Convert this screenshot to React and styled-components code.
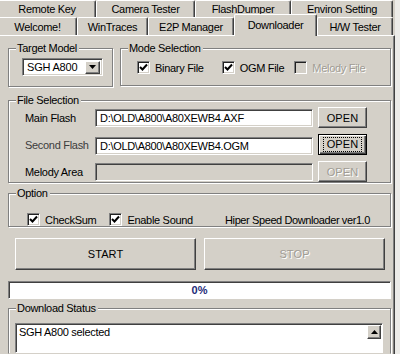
import React from "react";
import styled, { createGlobalStyle } from "styled-components";

const GlobalStyle = createGlobalStyle`
  html, body {
    margin: 0;
    padding: 0;
    background: #ecebe8;
  }
  body {
    font-family: "Liberation Sans", Arial, sans-serif;
    font-size: 11px;
    color: #000000;
  }
`;

const FACE = "#d4d0c8";

const Window = styled.div`
  width: 395px;
  height: 354px;
  overflow: hidden;
  background: ${FACE};
  display: flex;
  flex-direction: column;
`;

const TabRow = styled.div`
  display: flex;
  height: ${(p) => p.$h}px;
  margin-left: -2px;
`;

const Tab = styled.div`
  box-sizing: border-box;
  width: ${(p) => p.$w}px;
  height: ${(p) => (p.$active ? 22 : p.$h)}px;
  margin-top: ${(p) => (p.$active ? -3 : 0)}px;
  position: relative;
  z-index: ${(p) => (p.$active ? 2 : 1)};
  background: ${FACE};
  border-top: 1px solid #ffffff;
  border-left: 1px solid #ffffff;
  border-right: 1px solid #404040;
  box-shadow: inset -1px 0 0 #808080;
  border-radius: 2px 2px 0 0;
  display: flex;
  align-items: ${(p) => (p.$active ? "flex-start" : "center")};
  padding-top: ${(p) => (p.$active ? 4 : 0)}px;
  justify-content: center;
  white-space: nowrap;
  letter-spacing: -0.3px;
`;

const Page = styled.div`
  flex: 1;
  box-sizing: border-box;
  border-top: 1px solid #ffffff;
  border-right: 1px solid #404040;
  box-shadow: inset -1px 0 0 #808080;
  padding: 12px 3px 0 8px;
  display: flex;
  flex-direction: column;
`;

const Row = styled.div`
  display: flex;
  gap: ${(p) => p.$gap || 0}px;
`;

const Group = styled.div`
  box-sizing: border-box;
  width: ${(p) => (p.$w ? `${p.$w}px` : "auto")};
  flex: ${(p) => (p.$w ? "none" : 1)};
  height: ${(p) => (p.$h ? `${p.$h}px` : "auto")};
  margin-top: ${(p) => p.$mt || 0}px;
  border: 1px solid #808080;
  border-bottom-color: ${(p) => (p.$open ? "transparent" : "#808080")};
  box-shadow: inset 1px 1px 0 #ffffff, 1px 1px 0 #ffffff;
  display: flex;
  flex-direction: column;
`;

const Legend = styled.div`
  align-self: flex-start;
  margin: -7px 0 0 7px;
  padding: 0 2px 0 1px;
  line-height: 12px;
  background: ${FACE};
  letter-spacing: -0.3px;
  white-space: nowrap;
`;

const Select = styled.div`
  box-sizing: border-box;
  width: 81px;
  height: 18px;
  margin: 4px 0 0 13px;
  background: #ffffff;
  border: 1px solid;
  border-color: #808080 #ffffff #ffffff #808080;
  box-shadow: inset 1px 1px 0 #404040, inset -1px -1px 0 ${FACE};
  display: flex;
  align-items: center;
  padding: 0 2px 0 4px;
  letter-spacing: -0.2px;
`;

const SelectText = styled.span`
  flex: 1;
`;

const DropButton = styled.div`
  box-sizing: border-box;
  width: 15px;
  height: 13px;
  background: ${FACE};
  border: 1px solid;
  border-color: #ffffff #404040 #404040 #ffffff;
  box-shadow: inset -1px -1px 0 #808080;
  display: flex;
  align-items: center;
  justify-content: center;
`;

const CheckRow = styled.div`
  display: flex;
  align-items: center;
  margin: ${(p) => p.$m};
`;

const CheckItem = styled.label`
  display: flex;
  align-items: center;
  gap: 5px;
  margin-right: ${(p) => p.$mr || 0}px;
  color: ${(p) => (p.$disabled ? "#a09c94" : "#000000")};
  text-shadow: ${(p) => (p.$disabled ? "1px 1px 0 #ffffff" : "none")};
  letter-spacing: -0.3px;
  white-space: nowrap;
`;

const Box = styled.span`
  box-sizing: border-box;
  width: 13px;
  height: 13px;
  flex: none;
  background: ${(p) => (p.$disabled ? FACE : "#ffffff")};
  border: 1px solid;
  border-color: #808080 #ffffff #ffffff #808080;
  box-shadow: inset 1px 1px 0 #202020, inset -1px -1px 0 ${FACE};
  display: flex;
  align-items: center;
  justify-content: center;
`;

const FileRows = styled.div`
  display: flex;
  flex-direction: column;
  gap: 6px;
  margin: 1px 0 0 16px;
`;

const FileRow = styled.div`
  display: flex;
  align-items: center;
  height: 21px;
`;

const FieldLabel = styled.span`
  width: 70px;
  color: ${(p) => (p.$dim ? "#3c3c3c" : "#000000")};
  letter-spacing: -0.3px;
  white-space: nowrap;
`;

const Field = styled.div`
  box-sizing: border-box;
  width: 218px;
  height: 18px;
  margin-top: ${(p) => p.$mt || 0}px;
  background: ${(p) => (p.$disabled ? FACE : "#ffffff")};
  border: 1px solid;
  border-color: #808080 #ffffff #ffffff #808080;
  box-shadow: inset 1px 1px 0 #404040, inset -1px -1px 0 ${FACE};
  display: flex;
  align-items: center;
  padding-left: 4px;
  letter-spacing: -0.3px;
  white-space: nowrap;
  overflow: hidden;
`;

const Button = styled.div`
  box-sizing: border-box;
  width: ${(p) => (p.$w ? `${p.$w}px` : "auto")};
  flex: ${(p) => (p.$w ? "none" : 1)};
  height: ${(p) => p.$h}px;
  margin-left: ${(p) => p.$ml || 0}px;
  background: ${FACE};
  border: 1px solid;
  border-color: ${(p) =>
    p.$focus ? "#000000" : "#ffffff #404040 #404040 #ffffff"};
  box-shadow: ${(p) =>
    p.$focus
      ? "inset 1px 1px 0 #ffffff, inset -1px -1px 0 #404040, inset -2px -2px 0 #808080"
      : "inset -1px -1px 0 #808080"};
  display: flex;
  align-items: center;
  justify-content: center;
  color: ${(p) => (p.$disabled ? "#a09c94" : "#000000")};
  text-shadow: ${(p) => (p.$disabled ? "1px 1px 0 #ffffff" : "none")};
  letter-spacing: 0.1px;
`;

const FocusRing = styled.span`
  border: 1px dotted #000000;
  padding: 1px 3px;
  line-height: 11px;
`;

const InfoText = styled.span`
  margin-left: auto;
  margin-right: 20px;
  letter-spacing: -0.4px;
  white-space: nowrap;
`;

const ButtonRow = styled.div`
  display: flex;
  gap: 8px;
  margin: 11px 6px 0 7px;
`;

const Progress = styled.div`
  box-sizing: border-box;
  height: 18px;
  margin-top: 11px;
  background: #ffffff;
  border: 1px solid;
  border-color: #808080 #ffffff #ffffff #808080;
  box-shadow: inset 1px 1px 0 #404040;
  display: flex;
  align-items: center;
  justify-content: center;
  color: #1c2a78;
  font-weight: bold;
`;

const ListBox = styled.div`
  box-sizing: border-box;
  height: 30px;
  margin: 9px 7px 0 6px;
  background: #ffffff;
  border: 1px solid;
  border-color: #808080 #ffffff #ffffff #808080;
  box-shadow: inset 1px 1px 0 #404040;
  display: flex;
  align-items: flex-start;
`;

const ListText = styled.span`
  flex: 1;
  padding: 2px 0 0 3px;
  letter-spacing: -0.3px;
`;

const ScrollButton = styled.div`
  box-sizing: border-box;
  width: 14px;
  height: 14px;
  margin: 1px 1px 0 0;
  background: ${FACE};
  border: 1px solid;
  border-color: #ffffff #404040 #404040 #ffffff;
  box-shadow: inset -1px -1px 0 #808080;
  display: flex;
  align-items: center;
  justify-content: center;
`;

const Check = () => (
  <svg width="9" height="9" viewBox="0 0 9 9">
    <path d="M1 4 L3.5 6.5 L8 1.5" fill="none" stroke="#000" strokeWidth="2" />
  </svg>
);

const Arrow = ({ up }) => (
  <svg width="7" height="4" viewBox="0 0 7 4">
    <path d={up ? "M0 4 L3.5 0 L7 4 Z" : "M0 0 L7 0 L3.5 4 Z"} fill="#000" />
  </svg>
);

const CheckBox = ({ label, checked, disabled, mr }) => (
  <CheckItem $disabled={disabled} $mr={mr}>
    <Box $disabled={disabled}>{checked && <Check />}</Box>
    {label}
  </CheckItem>
);

const backTabs = [
  ["Remote Key", 98],
  ["Camera Tester", 99],
  ["FlashDumper", 96],
  ["Environ Setting", 102],
];

const frontTabs = [
  ["Welcome!", 79],
  ["WinTraces", 71],
  ["E2P Manager", 86],
  ["Downloader", 83, true],
  ["H/W Tester", 76],
];

const files = [
  { label: "Main Flash", value: "D:\\OLD\\A800\\A80XEWB4.AXF" },
  { label: "Second Flash", value: "D:\\OLD\\A800\\A80XEWB4.OGM", focus: true, dim: true },
  { label: "Melody Area", value: "", disabled: true },
];

export default function App() {
  return (
    <>
      <GlobalStyle />
      <Window>
        <TabRow $h={17}>
          {backTabs.map(([name, w]) => (
            <Tab key={name} $w={w} $h={17}>
              {name}
            </Tab>
          ))}
        </TabRow>
        <TabRow $h={18}>
          {frontTabs.map(([name, w, active]) => (
            <Tab key={name} $w={w} $h={18} $active={active}>
              {name}
            </Tab>
          ))}
        </TabRow>
        <Page>
          <Row $gap={7}>
            <Group $w={105} $h={39}>
              <Legend>Target Model</Legend>
              <Select>
                <SelectText>SGH A800</SelectText>
                <DropButton>
                  <Arrow />
                </DropButton>
              </Select>
            </Group>
            <Group $h={38}>
              <Legend>Mode Selection</Legend>
              <CheckRow $m="7px 0 0 16px">
                <CheckBox label="Binary File" checked mr={18} />
                <CheckBox label="OGM File" checked mr={10} />
                <CheckBox label="Melody File" disabled />
              </CheckRow>
            </Group>
          </Row>
          <Group $h={89} $mt={13}>
            <Legend>File Selection</Legend>
            <FileRows>
              {files.map((f) => (
                <FileRow key={f.label}>
                  <FieldLabel $dim={f.dim}>{f.label}</FieldLabel>
                  <Field $disabled={f.disabled} $mt={f.focus ? 3 : 1}>
                    {f.value}
                  </Field>
                  <Button
                    $w={49}
                    $h={21}
                    $ml={5}
                    $focus={f.focus}
                    $disabled={f.disabled}
                  >
                    {f.focus ? <FocusRing>OPEN</FocusRing> : "OPEN"}
                  </Button>
                </FileRow>
              ))}
            </FileRows>
          </Group>
          <Group $h={45} $mt={10}>
            <Legend>Option</Legend>
            <CheckRow $m="14px 0 0 18px">
              <CheckBox label="CheckSum" checked mr={13} />
              <CheckBox label="Enable Sound" checked />
              <InfoText>Hiper Speed Downloader ver1.0</InfoText>
            </CheckRow>
          </Group>
          <ButtonRow>
            <Button $h={32}>START</Button>
            <Button $h={32} $disabled>
              STOP
            </Button>
          </ButtonRow>
          <Progress>0%</Progress>
          <Group $mt={9} $open>
            <Legend>Download Status</Legend>
            <ListBox>
              <ListText>SGH A800 selected</ListText>
              <ScrollButton>
                <Arrow up />
              </ScrollButton>
            </ListBox>
          </Group>
        </Page>
      </Window>
    </>
  );
}
